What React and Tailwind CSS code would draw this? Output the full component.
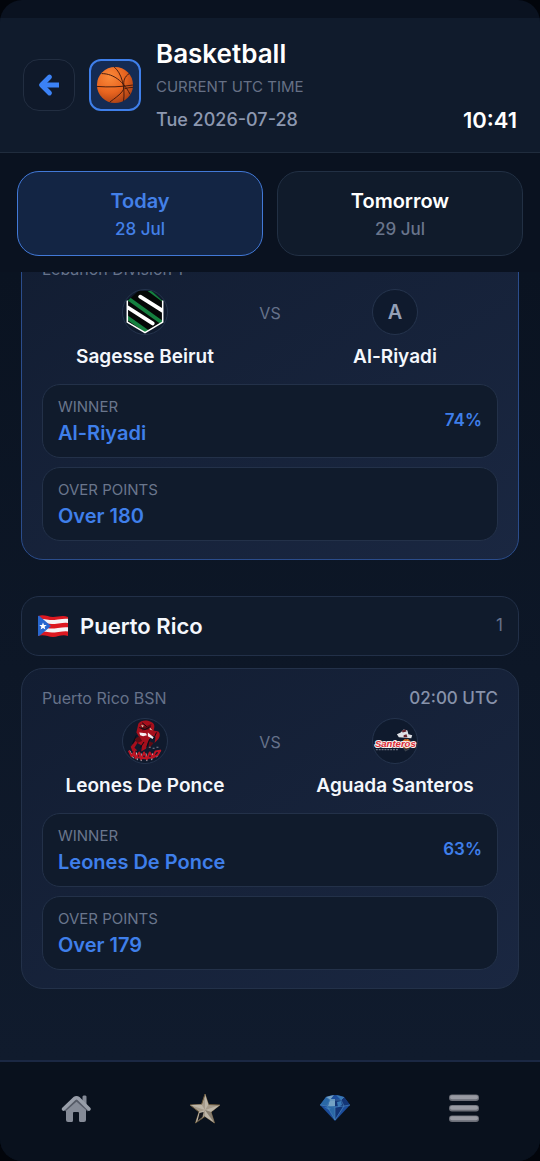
import React, { useState } from 'react';

const BackArrow = () => (
    <svg viewBox="0 0 24 24" className="h-6 w-6" fill="none" stroke="#3b82f6" strokeWidth="4.800" strokeLinejoin="round">
        <path d="M12.500 4 4.500 12l8 8" strokeLinecap="round" />
        <path d="M5 12h17" />
    </svg>
);

const BasketballIcon = () => (
    <svg viewBox="0 0 40 40" className="h-[38px] w-[38px]">
        <defs>
            <radialGradient id="ball" cx="0.35" cy="0.28" r="0.8">
                <stop offset="0" stopColor="#fb8a3a" />
                <stop offset="0.55" stopColor="#e8641f" />
                <stop offset="1" stopColor="#a33d14" />
            </radialGradient>
        </defs>
        <circle cx="20" cy="20" r="19" fill="url(#ball)" />
        <g fill="none" stroke="#42190e" strokeWidth="1">
            <path d="M1 21.500C13 22.500 27 22 39 20" />
            <path d="M19 1c8 6 12 22 10 36" />
            <path d="M6 8c9 0 21 4.500 30 22" />
            <path d="M35 8c-5 3-6.500 8-5.500 13 .5 5-4 9-15 17" />
            <path d="M30 24c3-1 6-1.500 9-1.500" />
        </g>
    </svg>
);

const SagesseLogo = () => (
    <svg viewBox="0 0 46 46" className="h-full w-full">
        <defs>
            <clipPath id="sagesse">
                <path d="M4 12 16 1h14l12 11v22L23 45 4 34z" />
            </clipPath>
        </defs>
        <g clipPath="url(#sagesse)">
            <path fill="#050807" d="M0 0h46v46H0z" />
            <path stroke="#15803f" strokeWidth="4" d="m3 7 39 28M25-2l22 16M2 27l24 17" />
            <path stroke="#fff" strokeWidth="4" strokeLinecap="round" d="m18 7 24 15M3 17l28 18" />
            <path stroke="#15803f" strokeWidth="2" d="m2 33 20 13" />
        </g>
        <path fill="none" stroke="#fff" strokeWidth="1.600" d="M4.500 11v22.500L23 44.500l18.500-11V11" />
    </svg>
);

const LeonesLogo = () => (
    <svg viewBox="0 0 46 46" className="h-full w-full">
        <path fill="#a50f1c" d="M16 5c3-4 9-4 13-2 5 2 4 6 3 9l5 1c2 2 2 5 0 8l-4 4 1-6-4-2-4 7-2 7-5 3 1-6-5-3-3 5 3 3-5 1-2-5 5-6 4-4-3-5z" />
        <path fill="#5f0b13" d="m18 5 5 3 7-3-3 6-7 1zM12 21l5-3 3 5-5 2zM27 23l5 2-5 6z" />
        <path fill="none" stroke="#080c14" strokeWidth="1" d="m17 9 6 2 6-3M20 4l5 4M14 17l-4 9M22 24l-4 6M35 14l-3 7M28 21l-3 8" />
        <path fill="#f7eef0" d="m17 14 7 1 1 2-4 1-3-1zM26 14l6 5-1 2-5-3z" />
        <path fill="#e9c5ad" d="m19 6 3 1-2 2zM28 9l3 3-3-1z" />
        <path fill="none" stroke="#d9c9ce" strokeWidth="1" d="m7 33 4 8m3-6 1 8m4-7v8m5-8 1 8m6-8-1 7m9-10-4 7" />
        <path fill="none" stroke="#be1424" strokeWidth="2" strokeLinejoin="round" d="m6 33 3 6 3-5 1 7 4-6 2 7 3-7 3 7 3-7 3 5 3-6 5-1-3 5M9 37l6 3 8 1 9-1 5-3" />
        <path fill="#7b8190" d="M27 29h2v1h-2zM31 30h2v1h-2zM35 29h2v1h-2z" />
    </svg>
);

const SanterosLogo = () => (
    <svg viewBox="0 0 46 46" className="h-full w-full">
        <path fill="#dfe1e6" d="m29 14 3-3 4 1 1 4 4 1-1 3-13-1-2-3z" />
        <path fill="#64202b" d="m30 12 4-1 1 2-4 1zM32 17l3-1 1 3h-4z" />
        <circle cx="35" cy="26" r="5" fill="#e77a25" />
        <path fill="none" stroke="#6f2d17" strokeWidth="0.800" d="m30 24 10 4M35 21c-2 3-1 8 1 10M39 22c-3 1-6 4-7 8" />
        <text
            x="2"
            y="29"
            fontFamily="Liberation Sans, sans-serif"
            fontSize="10"
            fontStyle="italic"
            fontWeight="700"
            fill="#dc2a34"
            stroke="#f5f0ee"
            strokeWidth="2"
            paintOrder="stroke"
        >
            Santeros
        </text>
        <path fill="none" stroke="#6b7280" strokeWidth="1.200" strokeDasharray="2 1" d="M3 32h23" />
        <path fill="none" stroke="#39414c" strokeWidth="1.500" d="m32 30 2 3 4-2" />
    </svg>
);

const PuertoRicoFlag = () => (
    <svg viewBox="0 0 32 24" className="h-6 w-8 shrink-0">
        <defs>
            <clipPath id="flag">
                <path d="M1 2c6-2 10 1 15 1s10-2 15 0v19c-6-2-10 1-15 1s-9-3-15-1z" />
            </clipPath>
        </defs>
        <g clipPath="url(#flag)">
            <path fill="#dc1820" d="M0 0h32v24H0z" />
            <path fill="none" stroke="#f4f4f6" strokeWidth="4" d="M0 7c6-1 10 1 15 1s11-2 17-1M0 15.500c6-1 10 1 15 1s11-2 17-1" />
            <path fill="#2867cf" d="M0 0 14 12 0 24z" />
            <path fill="#fff" d="m6 8.500 1 2.500 2.700.1-2.100 1.700.8 2.600L6 13.900l-2.400 1.500.8-2.600-2.100-1.700L5 11z" />
        </g>
    </svg>
);

const HomeIcon = () => (
    <svg viewBox="0 0 32 32" className="h-8 w-8">
        <path fill="#858b97" d="M22.500 4.500c0-1.500 4-1.500 4 0V14h-4zM6 17 16 8l10 9v11q0 2-2 2h-3.500q-1.500 0-1.500-1.500V21q0-1-1-1h-4q-1 0-1 1v7.500q0 1.500-1.500 1.500H8q-2 0-2-2z" />
        <path fill="none" stroke="#555b67" strokeWidth="4" d="M4 18 16.500 7 29 18" />
        <path fill="none" stroke="#989ea9" strokeWidth="3.600" strokeLinecap="round" strokeLinejoin="round" d="M3.500 17 14.500 6.500q2-1.500 4 0L29 17" />
    </svg>
);

const StarIcon = () => (
    <svg viewBox="0 0 32 32" className="h-8 w-8">
        <path fill="#a69b8b" stroke="#67563a" d="m16 2 3.500 10.500L31 13l-9 7 3.500 11L16 24.500 6.500 31 10 20l-9-7 11.500-.5z" />
        <path fill="#bdb5a7" d="m16 2 3.500 10.500L16 18zM31 13l-9 7-6-2zM25.500 31 16 24.500V18zM6.500 31 10 20l6-2zM1 13l11.500-.5L16 18z" />
        <path fill="#887e70" d="m16 18 6 2 3.500 11z" />
        <path fill="#15161a" d="m14.500 20-1 5-5 4 2-8z" />
    </svg>
);

const GemIcon = () => (
    <svg viewBox="0 0 32 32" className="h-8 w-8">
        <path fill="#1c4d9b" d="M7 5q9-4 18 0l6 8-15 16L1 13z" />
        <path fill="#74a2c4" d="m7 5 8-2-4 5zM11 7h5v8l-7-1z" />
        <path fill="#2a68a6" d="m1 13 6-8 4 3-3 6zM8 14h8v14z" />
        <path fill="#133576" d="m16 7 6 1 3 6h-9zM16 28V16l8-2zM25 5l6 8-6 1-3-6z" />
        <path fill="#3878b5" d="m17 3 8 2-3 3zM18 10l4-1 1 4-4 2zM5 15l7 1-2 2z" />
        <path fill="none" stroke="#4f86bb" strokeWidth="0.600" d="m1 13 7 1 8 1 9-1 6-1M7 5l4 3h11l3-3M8 14l8 14 9-14M11 8l-3 6M22 8l3 6M16 15v13" />
    </svg>
);

const MenuIcon = () => (
    <svg viewBox="0 0 32 32" className="h-8 w-8">
        <g fill="#6b6e77">
            <rect x="1" y="2.500" width="30" height="6.500" rx="3" />
            <rect x="1" y="13" width="30" height="6.500" rx="3" />
            <rect x="1" y="23.500" width="30" height="6.500" rx="3" />
        </g>
        <path stroke="#999ba3" strokeWidth="4" strokeLinecap="round" d="M4 5.200h24M4 15.700h24M4 26.200h24" />
    </svg>
);

const matches = [
    {
        id: 1,
        league: 'Lebanon Division 1',
        time: '',
        home: { name: 'Sagesse Beirut', logo: <SagesseLogo /> },
        away: { name: 'Al-Riyadi', logo: 'A' },
        winner: 'Al-Riyadi',
        chance: 74,
        over: 180
    },
    {
        id: 2,
        league: 'Puerto Rico BSN',
        time: '02:00 UTC',
        home: { name: 'Leones De Ponce', logo: <LeonesLogo /> },
        away: { name: 'Aguada Santeros', logo: <SanterosLogo /> },
        winner: 'Leones De Ponce',
        chance: 63,
        over: 179
    }
];

const days = [
    { id: 'today', label: 'Today', date: '28 Jul' },
    { id: 'tomorrow', label: 'Tomorrow', date: '29 Jul' }
];

const navItems = [
    { label: 'Home', icon: <HomeIcon /> },
    { label: 'Favourites', icon: <StarIcon /> },
    { label: 'Premium', icon: <GemIcon /> },
    { label: 'Menu', icon: <MenuIcon /> }
];

const Team = ({ team }) => (
    <div className="flex min-w-0 flex-col items-center">
        <div className="flex h-[46px] w-[46px] items-center justify-center overflow-hidden rounded-full border border-[#25344d] bg-[#0f1a2d] text-xl font-semibold text-[#94a0b8]">
            {team.logo}
        </div>
        <p className="mt-2 whitespace-nowrap text-[19px] leading-7 font-semibold text-[#f4f7fc]">{team.name}</p>
    </div>
);

const Prediction = ({ label, value, chance }) => (
    <div className="flex items-center justify-between rounded-[18px] border border-[#233149] bg-[#101b2c] px-[15px] py-2.5">
        <div>
            <p className="text-[15px] leading-6 text-[#6a768c]">{label}</p>
            <p className="text-xl leading-7 font-semibold text-[#3f7fea]">{value}</p>
        </div>
        {chance && <span className="text-[17px] font-semibold text-[#3f7fea]">{chance}%</span>}
    </div>
);

const MatchCard = ({ match, highlighted }) => (
    <article
        className={`rounded-[22px] border bg-linear-to-br from-[#121d32] to-[#1a2741] px-5 pt-[17px] pb-[18px] ${highlighted ? 'border-[#2b4d8c]' : 'border-[#233149]'}`}
    >
        <div className="flex items-center justify-between leading-6">
            <span className="text-base text-[#66728a]">{match.league}</span>
            <span className="text-[17px] leading-6 font-medium text-[#8792aa]">{match.time}</span>
        </div>
        <div className="mt-2 grid grid-cols-[1fr_44px_1fr]">
            <Team team={match.home} />
            <span className="pt-3 text-center text-base leading-6 text-[#66728a]">VS</span>
            <Team team={match.away} />
        </div>
        <div className="mt-[13px] flex flex-col gap-[9px]">
            <Prediction label="WINNER" value={match.winner} chance={match.chance} />
            <Prediction label="OVER POINTS" value={`Over ${match.over}`} />
        </div>
    </article>
);

const App = () => {
    const [activeDay, setActiveDay] = useState('today');

    return (
        <div className="h-screen bg-[#02050b] font-['Inter',sans-serif]">
            <div className="flex h-full flex-col overflow-hidden rounded-[22px] bg-[#0a1220]">
                <header className="mt-[18px] flex items-center border-b border-[#202c3d] bg-[#101b2c] px-[23px] py-4">
                    <button
                        aria-label="Back"
                        className="flex h-[52px] w-[52px] shrink-0 items-center justify-center rounded-2xl border border-[#222e41] bg-[#0f192a]"
                    >
                        <BackArrow />
                    </button>
                    <div className="ml-3.5 flex h-[52px] w-[52px] shrink-0 items-center justify-center rounded-xl border-2 border-[#3f7fea] bg-[#142b53]">
                        <BasketballIcon />
                    </div>
                    <div className="ml-[15px] flex-1">
                        <h1 className="text-[26px] leading-10 font-semibold text-white">Basketball</h1>
                        <p className="text-[15px] leading-[26px] text-[#667085]">CURRENT UTC TIME</p>
                        <div className="mt-1 flex items-center justify-between leading-8">
                            <span className="text-lg leading-8 font-medium text-[#8d98b0]">Tue 2026-07-28</span>
                            <time className="text-[22px] leading-8 font-semibold text-white">10:41</time>
                        </div>
                    </div>
                </header>

                <div className="grid grid-cols-2 gap-3.5 px-[17px] pt-[18px] pb-4">
                    {days.map(day => (
                        <button
                            key={day.id}
                            onClick={() => setActiveDay(day.id)}
                            className={`rounded-[22px] border py-[13px] ${
                                activeDay === day.id
                                    ? 'border-[#4279d7] bg-[#132544] text-[#4380e8]'
                                    : 'border-[#223044] bg-[#101b2b] text-white'
                            }`}
                        >
                            <span className="block text-xl leading-8 font-semibold">{day.label}</span>
                            <span className={`block text-[17px] leading-[25px] font-medium ${activeDay === day.id ? 'text-[#4380e8]' : 'text-[#69758c]'}`}>
                                {day.date}
                            </span>
                        </button>
                    ))}
                </div>

                <main className="min-h-0 flex-1 overflow-hidden bg-linear-to-b from-[#0a1321] to-[#101b2d] px-[21px]">
                    {/* list is scrolled part of the way down */}
                    <div className="-mt-[33px]">
                        <MatchCard match={matches[0]} highlighted />

                        <section className="mt-9">
                            <div className="flex items-center rounded-[18px] border border-[#223048] bg-[#101b2c] px-[15px] py-[13px]">
                                <PuertoRicoFlag />
                                <h2 className="ml-[11px] flex-1 text-[22px] leading-8 font-semibold text-[#f4f7fc]">Puerto Rico</h2>
                                <span className="text-[17px] text-[#66728a]">1</span>
                            </div>
                            <div className="mt-3">
                                <MatchCard match={matches[1]} />
                            </div>
                        </section>
                    </div>
                </main>

                <nav className="grid grid-cols-4 border-t-2 border-[#1b2843] bg-[#09111d] px-[11px] pt-[30px] pb-[37px]">
                    {navItems.map(item => (
                        <button key={item.label} aria-label={item.label} className="flex items-center justify-center">
                            {item.icon}
                        </button>
                    ))}
                </nav>
            </div>
        </div>
    );
};

export default App;
